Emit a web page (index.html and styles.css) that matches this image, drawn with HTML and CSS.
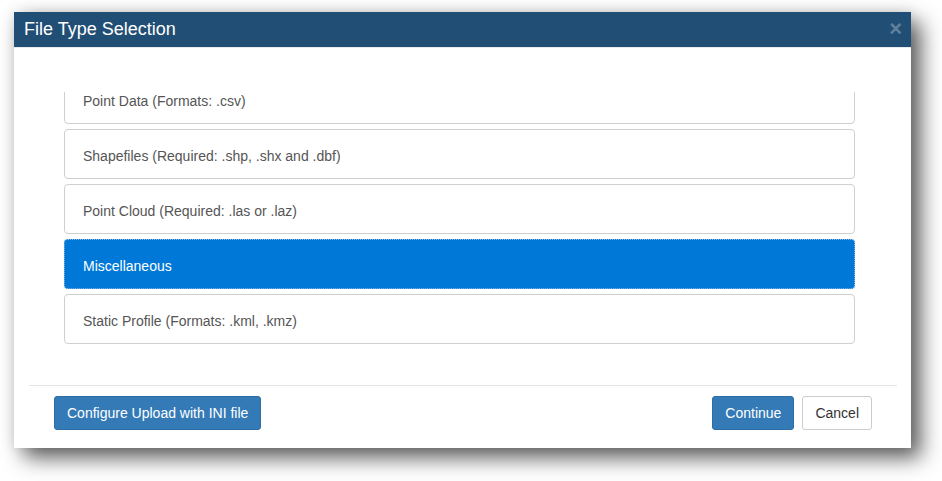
FILE: index.html
```html
<!DOCTYPE html>
<html>
<head>
<meta charset="utf-8">
<link rel="stylesheet" href="styles.css">
</head>
<body>
<div class="modal">
  <div class="modal-header">
    <span class="modal-title">File Type Selection</span>
    <span class="close">&times;</span>
  </div>
  <div class="modal-body">
    <div class="list-viewport">
      <div class="list">
        <div class="item">Point Data (Formats: .csv)</div>
        <div class="item">Shapefiles (Required: .shp, .shx and .dbf)</div>
        <div class="item">Point Cloud (Required: .las or .laz)</div>
        <div class="item selected">Miscellaneous</div>
        <div class="item">Static Profile (Formats: .kml, .kmz)</div>
      </div>
    </div>
  </div>
  <div class="divider"></div>
  <div class="modal-footer">
    <button class="btn btn-primary">Configure Upload with INI file</button>
    <div class="right">
      <button class="btn btn-primary">Continue</button>
      <button class="btn btn-default">Cancel</button>
    </div>
  </div>
</div>
</body>
</html>
```
FILE: styles.css
```css
html, body {
  margin: 0;
  padding: 0;
  background: #fff;
  font-family: "Liberation Sans", Arial, sans-serif;
}
body {
  padding: 12px 0 0 14px;
  height: 481px;
  box-sizing: border-box;
  overflow: hidden;
}
.modal {
  width: 897px;
  height: 436px;
  background: #fff;
  box-shadow: 10px 10px 20px rgba(0,0,0,0.62), 0 0 14px rgba(0,0,0,0.12);
  display: flex;
  flex-direction: column;
}
.modal-header {
  height: 36px;
  flex: none;
  background: #214e74;
  display: flex;
  align-items: center;
  justify-content: space-between;
  padding: 0 9px 0 10px;
  border-bottom: 1px solid #e6ebf0;
  box-sizing: border-box;
}
.modal-title {
  color: #fff;
  font-size: 18px;
  line-height: 20px;
  margin-top: -1px;
}
.close {
  color: rgba(255,255,255,0.3);
  font-weight: bold;
  font-size: 22px;
  line-height: 20px;
  margin-top: -1px;
}
.modal-body {
  height: 337px;
  flex: none;
  padding: 44px 56px 0 50px;
  box-sizing: border-box;
}
.list-viewport {
  height: 260px;
  overflow: hidden;
}
.list {
  margin-top: -18px;
  display: flex;
  flex-direction: column;
  gap: 5px;
}
.item {
  height: 50px;
  box-sizing: border-box;
  border: 1px solid #cfcfcf;
  border-radius: 4px;
  padding-left: 18px;
  display: flex;
  align-items: center;
  font-size: 14px;
  color: #555;
  padding-top: 3px;
}
.item.selected {
  background: #0078d7;
  color: #fff;
  border: 1px dotted #8fb9e3;
}
.divider {
  margin: 0 14px 0 15px;
  border-top: 1px solid #e5e5e5;
}
.modal-footer {
  display: flex;
  justify-content: space-between;
  padding: 10px 39px 0 40px;
}
.right {
  display: flex;
  gap: 8px;
}
.btn {
  font-family: "Liberation Sans", Arial, sans-serif;
  font-size: 14px;
  line-height: 20px;
  padding: 6px 12px;
  border-radius: 3px;
  border: 1px solid transparent;
  cursor: pointer;
}
.btn-primary {
  background: #337ab7;
  border-color: #2e6da4;
  color: #fff;
}
.btn-default {
  background: #fff;
  border-color: #ccc;
  color: #333;
}
```
